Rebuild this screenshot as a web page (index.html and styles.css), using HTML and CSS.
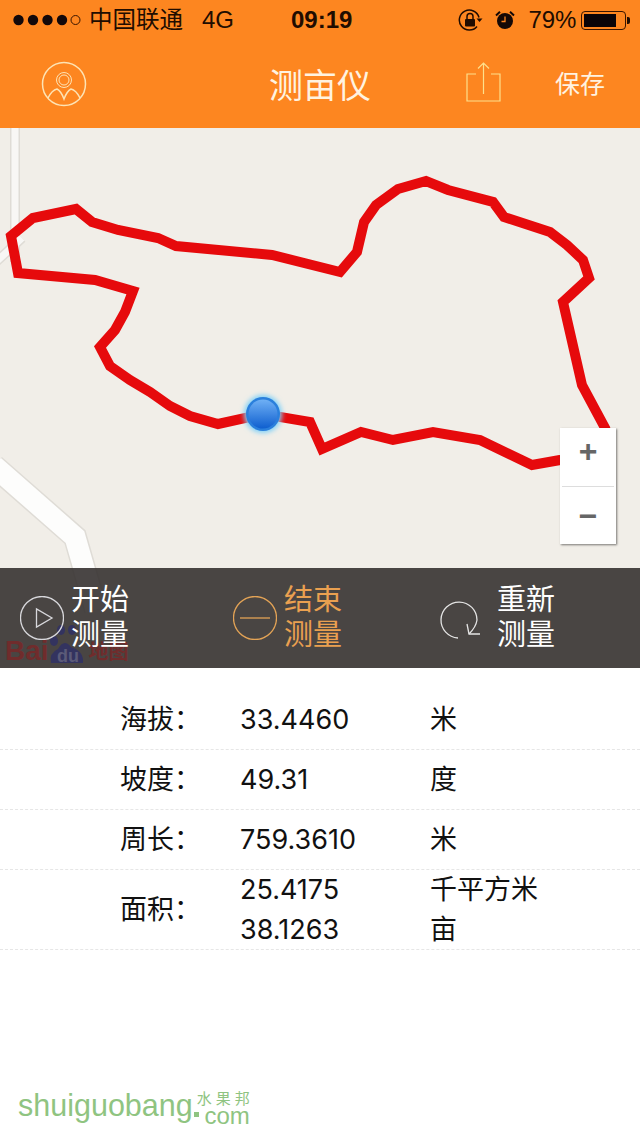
FILE: index.html
```html
<!DOCTYPE html>
<html lang="zh-CN">
<head>
    <meta charset="UTF-8">
    <meta name="viewport" content="width=device-width, initial-scale=1.0">
    <title>测亩仪</title>
    <link rel="stylesheet" href="styles.css">
</head>
<body>
    <div class="page">
        <header class="top">
            <div class="status">
                <svg class="signal" width="68" height="12" viewBox="0 0 68 12">
                    <circle cx="5.500" cy="6" r="5.200" fill="#12080a"/>
                    <circle cx="20" cy="6" r="5.200" fill="#12080a"/>
                    <circle cx="34.500" cy="6" r="5.200" fill="#12080a"/>
                    <circle cx="49" cy="6" r="5.200" fill="#12080a"/>
                    <circle cx="62.500" cy="6" r="4.500" fill="none" stroke="#3a1500" stroke-width="1"/>
                </svg>
                <span class="carrier">中国联通</span>
                <span class="network">4G</span>
                <span class="clock">09:19</span>
                <svg class="lock" width="26" height="24" viewBox="0 0 26 24">
                    <path d="M21 9.500A10 10 0 1 0 19 18.500" fill="none" stroke="#200c00" stroke-width="1.500"/>
                    <path d="M18.500 10.500h6l-3 3.500z" fill="#200c00"/>
                    <rect x="7" y="11" width="10" height="7.500" rx="1" fill="#200c00"/>
                    <path d="M9 11V8.500a3 3 0 0 1 6 0V11" fill="none" stroke="#200c00" stroke-width="1.500"/>
                </svg>
                <svg class="alarm" width="20" height="20" viewBox="0 0 20 20">
                    <circle cx="10" cy="11" r="8" fill="#140806"/>
                    <path d="M1 5.500L5 1.800M19 5.500L15 1.800" stroke="#140806" stroke-width="2"/>
                    <path d="M10 6.500V11.500H6.500" fill="none" stroke="#fd8620" stroke-width="1.300"/>
                </svg>
                <span class="percent">79%</span>
                <div class="battery"><div class="battery-level"></div></div>
                <div class="battery-cap"></div>
            </div>
            <nav class="nav">
                <div class="nav-left">
                    <svg width="46" height="46" viewBox="0 0 46 46" fill="none" stroke="#fde3b4" stroke-width="1.500">
                        <circle cx="23" cy="23" r="21.500"/>
                        <circle cx="23" cy="19" r="7.500" stroke-width="1"/>
                        <circle cx="23" cy="19" r="5" stroke-width="1"/>
                        <path d="M7 37Q11 29 16 28Q20 30 23 38Q26 30 30 28Q35 29 39 37"/>
                    </svg>
                </div>
                <h1 class="title">测亩仪</h1>
                <div class="nav-right">
                    <svg class="share" width="35" height="40" viewBox="0 0 35 40" fill="none" stroke="#fde08c" stroke-width="1.200">
                        <path d="M10 12H1V39H34V12H25"/>
                        <path d="M17.500 1V32M12 6.500L17.500 1L23 6.500"/>
                    </svg>
                    <span class="save">保存</span>
                </div>
            </nav>
        </header>

        <section class="map">
            <svg class="map-canvas" width="640" height="540" viewBox="0 128 640 540">
                <defs>
                    <linearGradient id="dot" x1="0" y1="0" x2="0" y2="1">
                        <stop offset="0" stop-color="#6fb0f5"/>
                        <stop offset="1" stop-color="#0f5fcf"/>
                    </linearGradient>
                    <filter id="glow" x="-50%" y="-50%" width="200%" height="200%">
                        <feGaussianBlur stdDeviation="2.500"/>
                    </filter>
                </defs>
                <g fill="none">
                    <path class="road-edge" d="M15 128V262M22 238L-4 262"/>
                    <path class="road-fill" d="M15 128V262M22 238L-4 262"/>
                    <path class="road-edge wide" d="M-6 466L75 537L96 610"/>
                    <path class="road-fill wide" d="M-6 466L75 537L96 610"/>
                    <path class="route" d="M133 291L95 280L18 273L11 236L33 218L76 209L92 222L118 230L158 238L176 246L272 255L340 272L357 252L364 222L376 205L398 189L426 181L448 190L493 202L504 217L550 232L567 245L583 260L589 278L563 302L582 385L605 428L600 450L560 460L532 465L480 440L433 432L393 440L361 432L322 449L310 422L263 414L218 424L190 416L170 406L150 392L130 380L110 366L100 347L115 330L125 312Z"/>
                </g>
                <circle cx="263" cy="414" r="19" fill="#7fd0f8" filter="url(#glow)"/>
                <circle cx="263" cy="414" r="17" fill="#2a7fdc"/>
                <circle cx="263" cy="414" r="14.500" fill="url(#dot)"/>
            </svg>

            <div class="zoom-control">
                <div class="zoom-btn zoom-in">+</div>
                <div class="zoom-btn zoom-out">−</div>
            </div>

            <div class="actions">
                <div class="logo">
                    <span class="logo-bai">Bai</span>
                    <svg class="logo-paw" width="36" height="48" viewBox="0 0 36 48">
                        <ellipse cx="5" cy="24" rx="4" ry="5" fill="#33335f"/>
                        <ellipse cx="12" cy="13" rx="4" ry="5" fill="#33335f"/>
                        <ellipse cx="23" cy="13" rx="4" ry="5" fill="#33335f"/>
                        <path d="M2 46Q0 36 9 32Q15 21 22 30Q35 34 34 46Z" fill="#33335f"/>
                        <text x="8" y="45" class="logo-du">du</text>
                    </svg>
                    <span class="logo-map">地图</span>
                </div>
                <div class="action">
                    <svg width="44" height="44" viewBox="0 0 44 44" fill="none" stroke="#d8d8dc" stroke-width="1.300">
                        <circle cx="22" cy="22" r="21.500"/>
                        <path d="M16.500 13V31L32 22Z"/>
                    </svg>
                    <div class="action-text">开始<br>测量</div>
                </div>
                <div class="action active">
                    <svg width="44" height="44" viewBox="0 0 44 44" fill="none" stroke="#e3a356" stroke-width="1.300">
                        <circle cx="22" cy="22" r="21.500"/>
                        <path d="M7 22H37"/>
                    </svg>
                    <div class="action-text">结束<br>测量</div>
                </div>
                <div class="action restart">
                    <svg width="44" height="46" viewBox="0 0 44 46" fill="none" stroke="#e4e4e4" stroke-width="1.300">
                        <path d="M18 43A18 18 0 1 1 37 25Q36 32 29 39"/>
                        <path d="M27 29L29 39H40"/>
                    </svg>
                    <div class="action-text">重新<br>测量</div>
                </div>
            </div>
        </section>

        <section class="stats">
            <div class="stat-row">
                <div class="stat-label">海拔：</div>
                <div class="stat-value">33.4460</div>
                <div class="stat-unit">米</div>
            </div>
            <div class="stat-row">
                <div class="stat-label">坡度：</div>
                <div class="stat-value">49.31</div>
                <div class="stat-unit">度</div>
            </div>
            <div class="stat-row">
                <div class="stat-label">周长：</div>
                <div class="stat-value">759.3610</div>
                <div class="stat-unit">米</div>
            </div>
            <div class="stat-row tall">
                <div class="stat-label">面积：</div>
                <div class="stat-value">25.4175<br>38.1263</div>
                <div class="stat-unit">千平方米<br>亩</div>
            </div>
        </section>

        <div class="watermark">
            <span class="wm-name">shuiguobang</span>
            <span class="wm-dot"></span>
            <div class="wm-side">
                <span class="wm-cn">水果邦</span>
                <span class="wm-com">com</span>
            </div>
        </div>
    </div>
</body>
</html>
```

FILE: styles.css
```css
* {
    box-sizing: border-box;
}

body {
    margin: 0;
    background-color: #fff;
    font-family: "Liberation Sans", "Noto Sans CJK SC", sans-serif;
}

.page {
    position: relative;
    width: 640px;
    height: 1136px;
    overflow: hidden;
}

.top {
    height: 128px;
    background-color: #fd8620;
}

/* status bar */
.status {
    display: flex;
    align-items: center;
    height: 40px;
    padding-left: 13px;
    color: #200c00;
    font-size: 24px;
}

.carrier {
    margin: -4px 0 0 8px;
    font-size: 23.500px;
}

.network {
    margin-left: 19px;
}

.clock {
    margin-left: 57px;
    font-weight: bold;
    font-size: 24px;
}

.lock {
    margin-left: 106px;
}

.alarm {
    margin-left: 11px;
}

.percent {
    margin-left: 13px;
}

.battery {
    width: 45px;
    height: 19px;
    margin-left: 5px;
    padding: 2px;
    border: 1px solid #3a1500;
    border-radius: 4px;
}

.battery-level {
    width: 32px;
    height: 100%;
    background-color: #0a0408;
}

.battery-cap {
    width: 3px;
    height: 7px;
    margin-left: 1px;
    background-color: #200c00;
    border-radius: 0 2px 2px 0;
}

/* nav */
.nav {
    display: grid;
    grid-template-columns: 1fr auto 1fr;
    align-items: center;
    height: 88px;
}

.nav-left {
    display: flex;
    padding: 0 0 0 41px;
}

.title {
    margin: -2px 0 0;
    color: #fff3e0;
    font-size: 34px;
    font-weight: normal;
}

.nav-right {
    display: flex;
    align-items: center;
    padding-left: 95px;
}

.share {
    margin-top: -4px;
}

.save {
    margin: -4px 0 0 54px;
    color: #fff3e0;
    font-size: 25px;
}

/* map */
.map {
    position: relative;
    height: 540px;
    background-color: #f1eee8;
}

.map-canvas {
    display: block;
}

.road-edge {
    stroke: #dfdcd6;
    stroke-width: 10;
}

.road-fill {
    stroke: #f8f7f5;
    stroke-width: 7;
}

.road-edge.wide {
    stroke-width: 24;
}

.road-fill.wide {
    stroke: #fdfdfc;
    stroke-width: 21;
}

.route {
    stroke: #e60a0c;
    stroke-width: 10;
    stroke-linejoin: miter;
}

.zoom-control {
    position: absolute;
    top: 300px;
    left: 560px;
    width: 56px;
    height: 116px;
    background-color: #fff;
    box-shadow: 1px 1px 2px rgba(0, 0, 0, 0.5);
}

.zoom-btn {
    display: flex;
    justify-content: center;
    align-items: center;
    height: 58px;
    color: #666;
    font-size: 32px;
    font-weight: bold;
}

.zoom-in {
    border-bottom: 1px solid #ddd;
    margin: 0 2px;
    height: 59px;
    padding-bottom: 12px;
}

.zoom-out {
    height: 57px;
    padding-top: 1px;
}

/* action bar */
.actions {
    position: absolute;
    left: 0;
    bottom: 0;
    display: grid;
    grid-template-columns: 213px 207px 1fr;
    align-items: center;
    width: 100%;
    height: 100px;
    padding-left: 20px;
    background-color: rgba(54, 50, 49, 0.9);
}

.action {
    position: relative;
    display: flex;
    align-items: center;
    gap: 7px;
    color: #fff;
}

.action-text {
    font-size: 29px;
    line-height: 35px;
}

.active {
    color: #eaa050;
}

.restart .action-text {
    margin-left: 6px;
}

.logo {
    position: absolute;
    left: 5px;
    bottom: 3px;
    display: flex;
    align-items: flex-end;
    height: 30px;
    font-weight: bold;
}

.logo-bai {
    color: #702c2c;
    font-size: 28px;
    line-height: 28px;
}

.logo-paw {
    flex-shrink: 0;
}

.logo-du {
    fill: #5b5a78;
    font-size: 18px;
    font-weight: bold;
}

.logo-map {
    margin-left: 4px;
    color: #702c2c;
    font-size: 20px;
    line-height: 26px;
}

/* stats table */
.stats {
    padding-top: 22px;
    color: #111;
}

.stat-row {
    display: grid;
    grid-template-columns: 120px 190px 1fr;
    align-items: center;
    height: 60px;
    padding-left: 120px;
    border-bottom: 1px dashed #e6e6e6;
    font-size: 27px;
    line-height: 40px;
}

.stat-row.tall {
    height: 80px;
}

.stat-value {
    font-family: Inter, "Liberation Sans", sans-serif;
    font-size: 27px;
}

/* watermark */
.watermark {
    position: absolute;
    left: 18px;
    top: 1088px;
    display: flex;
    align-items: flex-end;
    color: #8fc481;
}

.wm-name {
    margin-bottom: 5px;
    font-size: 30.500px;
    line-height: 34px;
}

.wm-dot {
    width: 5px;
    height: 5px;
    margin: 0 4px 10px 1px;
    background-color: #8fc481;
}

.wm-side {
    display: flex;
    flex-direction: column;
    margin-left: -6px;
    align-items: flex-end;
}

.wm-cn {
    font-family: "Noto Sans CJK SC", sans-serif;
    font-size: 15px;
    line-height: 15px;
    letter-spacing: 4px;
    margin-right: -4px;
}

.wm-com {
    font-size: 24px;
    line-height: 22px;
}
```
